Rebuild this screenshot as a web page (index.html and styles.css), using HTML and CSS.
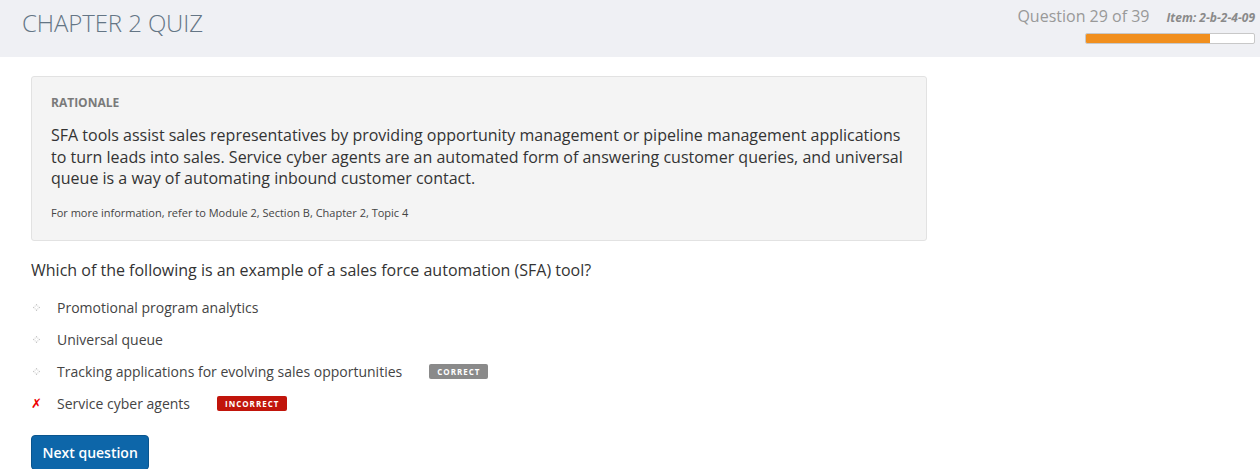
FILE: index.html
```html
<!DOCTYPE html>
<html>
<head>
<meta charset="utf-8">
<link rel="stylesheet" href="styles.css">
</head>
<body>
<header class="topbar">
  <h1 class="title">CHAPTER 2 QUIZ</h1>
  <div class="status">
    <div class="status-line">
      <span class="counter">Question 29 of 39</span>
      <span class="item">Item: 2-b-2-4-09</span>
    </div>
    <div class="progress"><div class="progress-fill" style="width:74%"></div></div>
  </div>
</header>
<main class="content">
  <section class="rationale">
    <div class="rationale-label">RATIONALE</div>
    <p class="rationale-text">SFA tools assist sales representatives by providing opportunity management or pipeline management applications to turn leads into sales. Service cyber agents are an automated form of answering customer queries, and universal queue is a way of automating inbound customer contact.</p>
    <p class="rationale-ref">For more information, refer to Module 2, Section B, Chapter 2, Topic 4</p>
  </section>
  <p class="question">Which of the following is an example of a sales force automation (SFA) tool?</p>
  <ul class="options">
    <li class="option"><span class="marker"><span class="diamond"></span></span><span class="opt-text">Promotional program analytics</span></li>
    <li class="option"><span class="marker"><span class="diamond"></span></span><span class="opt-text">Universal queue</span></li>
    <li class="option"><span class="marker"><span class="diamond"></span></span><span class="opt-text">Tracking applications for evolving sales opportunities</span><span class="badge badge-correct">CORRECT</span></li>
    <li class="option"><span class="marker cross">&#x2717;</span><span class="opt-text">Service cyber agents</span><span class="badge badge-incorrect">INCORRECT</span></li>
  </ul>
  <button class="next-btn">Next question</button>
</main>
</body>
</html>
```
FILE: styles.css
```css
* { box-sizing: border-box; }
html, body { margin: 0; padding: 0; }
body {
  font-family: "Open Sans", "Liberation Sans", sans-serif;
  color: #333;
  background: #fff;
  overflow: hidden;
}
.topbar {
  background: #eff0f4;
  height: 57px;
  display: flex;
  justify-content: space-between;
  align-items: flex-start;
  padding: 0 5px 0 22px;
}
.title {
  margin: 6px 0 0;
  font-weight: 300;
  font-size: 24px;
  line-height: 34px;
  color: #647585;
  letter-spacing: -0.1px;
}
.status {
  display: flex;
  flex-direction: column;
  align-items: flex-end;
  padding-top: 5px;
}
.status-line {
  display: flex;
  align-items: baseline;
  gap: 17px;
}
.counter {
  font-size: 16px;
  color: #999;
  line-height: 22px;
}
.item {
  font-size: 12px;
  font-style: italic;
  font-weight: 700;
  color: #8a8a8a;
}
.progress {
  margin-top: 6px;
  width: 170px;
  height: 11px;
  border: 1px solid #c8c8c8;
  border-radius: 2px;
  background: #fff;
  overflow: hidden;
}
.progress-fill {
  height: 100%;
  background: #f18f1e;
}
.content {
  padding: 19px 31px 0;
}
.rationale {
  width: 896px;
  background: #f4f4f4;
  border: 1px solid #e2e2e2;
  border-radius: 3px;
  padding: 18px 19px 19px;
}
.rationale-label {
  font-size: 12px;
  font-weight: 700;
  color: #7a7a7a;
  line-height: 16px;
}
.rationale-text {
  margin: 14px 0 0;
  font-size: 16px;
  line-height: 21.5px;
  color: #333;
}
.rationale-ref {
  margin: 15px 0 0;
  font-size: 11px;
  line-height: 16px;
  color: #444;
}
.question {
  margin: 18px 0 0;
  font-size: 16px;
  line-height: 22px;
  color: #333;
}
.options {
  list-style: none;
  margin: 11px 0 0;
  padding: 0;
}
.option {
  display: flex;
  align-items: center;
  height: 32px;
  font-size: 14px;
  color: #444;
}
.marker {
  width: 26px;
  display: flex;
  align-items: center;
  padding-left: 2px;
}
.diamond {
  width: 5px;
  height: 5px;
  border: 1px dotted #c4c4c4;
  transform: rotate(45deg);
  margin-left: 1px;
}
.cross {
  color: #e00;
  font-size: 13px;
  font-weight: 700;
  font-style: italic;
  padding-left: 0;
  font-family: "DejaVu Sans", sans-serif;
}
.opt-text { line-height: 20px; }
.badge {
  margin-left: 27px;
  font-size: 8px;
  font-weight: 700;
  letter-spacing: 1px;
  color: #fff;
  border-radius: 2px;
  line-height: 15px;
  height: 15px;
  padding: 0 8px;
}
.badge-correct { background: #8a8a8a; }
.badge-incorrect { background: #c1150b; }
.next-btn {
  margin-top: 15px;
  font-family: "Open Sans", "Liberation Sans", sans-serif;
  font-size: 14px;
  font-weight: 600;
  color: #fff;
  background: #0d66a9;
  border: 1px solid #0a558e;
  border-radius: 4px;
  height: 35px;
  padding: 0 10.5px;
}
```
